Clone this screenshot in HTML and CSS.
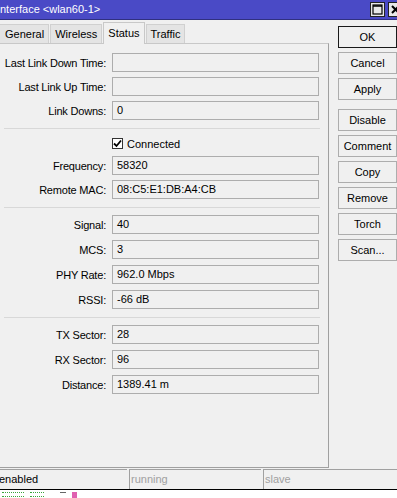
FILE: index.html
```html
<!DOCTYPE html>
<html lang="en">
<head>
    <meta charset="UTF-8">
    <title>Interface &lt;wlan60-1&gt;</title>
    <link rel="stylesheet" href="styles.css">
</head>
<body>
<div class="window">
    <div class="titlebar">
        <span class="title">nterface &lt;wlan60-1&gt;</span>
        <div class="title-buttons">
            <span class="tbtn"><svg width="11" height="11" viewBox="0 0 11 11"><rect x="1" y="1" width="9" height="9" fill="none" stroke="#000" stroke-width="1.2"/><line x1="1" y1="2" x2="10" y2="2" stroke="#000" stroke-width="1.5"/></svg></span>
            <span class="tbtn close"><svg width="11" height="11" viewBox="0 0 11 11"><path d="M2 2 L9 9 M9 2 L2 9" stroke="#000" stroke-width="2"/></svg></span>
        </div>
    </div>

    <div class="main">
        <div class="left">
            <div class="tabs">
                <div class="tab">General</div>
                <div class="tab">Wireless</div>
                <div class="tab active">Status</div>
                <div class="tab">Traffic</div>
            </div>
            <div class="panel">
                <div class="row"><label>Last Link Down Time:</label><div class="field"></div></div>
                <div class="row"><label>Last Link Up Time:</label><div class="field"></div></div>
                <div class="row"><label>Link Downs:</label><div class="field">0</div></div>
                <div class="sep"></div>
                <div class="row check-row"><label></label><div class="check"><span class="box"><svg width="9" height="9" viewBox="0 0 9 9"><path d="M1 4.5 L3.5 7 L8 1.5" fill="none" stroke="#000" stroke-width="1.8"/></svg></span>Connected</div></div>
                <div class="row"><label>Frequency:</label><div class="field">58320</div></div>
                <div class="row"><label>Remote MAC:</label><div class="field">08:C5:E1:DB:A4:CB</div></div>
                <div class="sep"></div>
                <div class="row wide"><label>Signal:</label><div class="field">40</div></div>
                <div class="row wide"><label>MCS:</label><div class="field">3</div></div>
                <div class="row wide"><label>PHY Rate:</label><div class="field">962.0 Mbps</div></div>
                <div class="row"><label>RSSI:</label><div class="field">-66 dB</div></div>
                <div class="sep"></div>
                <div class="row wide"><label>TX Sector:</label><div class="field">28</div></div>
                <div class="row wide"><label>RX Sector:</label><div class="field">96</div></div>
                <div class="row"><label>Distance:</label><div class="field">1389.41 m</div></div>
            </div>
        </div>

        <div class="buttons">
            <button class="default">OK</button>
            <button>Cancel</button>
            <button>Apply</button>
            <button class="gap">Disable</button>
            <button>Comment</button>
            <button>Copy</button>
            <button>Remove</button>
            <button>Torch</button>
            <button>Scan...</button>
        </div>
    </div>

    <div class="statusbar">
        <div class="cell first">enabled</div>
        <div class="cell dim">running</div>
        <div class="cell dim last">slave</div>
    </div>
</div>
<div class="behind">
    <span class="mark green w1"></span>
    <span class="mark green w2"></span>
    <span class="mark grey"></span>
    <span class="mark pink"></span>
</div>
</body>
</html>
```

FILE: styles.css
```css
body {
    margin: 0;
    font-family: "Liberation Sans", Arial, sans-serif;
    font-size: 11px;
    color: #000;
    background: #fff;
    width: 397px;
    height: 498px;
    overflow: hidden;
}
.window {
    background-color: #f0f0f0;
    height: 489px;
    border-bottom: 1px solid #000;
    display: flex;
    flex-direction: column;
}
.titlebar {
    height: 19px;
    background-color: #4a4ac6;
    display: flex;
    align-items: center;
    justify-content: space-between;
    color: #fff;
    font-size: 11px;
    border-bottom: 1px solid #303080;
    flex-shrink: 0;
}
.title {
    margin-top: -1px;
}
.title-buttons {
    display: flex;
    gap: 3px;
    margin-right: -6px;
}
.tbtn {
    width: 13px;
    height: 13px;
    background: #e8e8e8;
    border: 1px solid #222;
    display: flex;
    align-items: center;
    justify-content: center;
}
.main {
    display: flex;
    flex: 1;
}
.left {
    width: 329px;
    display: flex;
    flex-direction: column;
}
.tabs {
    display: flex;
    height: 22px;
    align-items: flex-end;
    padding-top: 1px;
}
.tab {
    height: 19px;
    line-height: 19px;
    padding: 0 4px;
    margin-right: 1px;
    background: #e4e4e4;
    border: 1px solid #d0d0d0;
    border-bottom: none;
    box-sizing: border-box;
    white-space: nowrap;
}
.tab:first-child {
    margin-left: -1px;
    padding-left: 5px;
}
.tab.active {
    height: 22px;
    line-height: 20px;
    background: #f0f0f0;
    border-color: #c8c8c8;
    position: relative;
    top: 1px;
}
.panel {
    flex: 1;
    border-top: 1px solid #c8c8c8;
    border-right: 1px solid #a0a0a0;
    border-bottom: 1px solid #a0a0a0;
    padding: 9px 0 0 0;
    display: flex;
    flex-direction: column;
}
.row {
    display: flex;
    align-items: center;
    height: 19px;
    margin-bottom: 5px;
    white-space: nowrap;
}
.row.wide {
    margin-bottom: 6px;
}
.row label {
    width: 112px;
    text-align: right;
    padding-right: 6px;
    box-sizing: border-box;
    flex-shrink: 0;
    letter-spacing: -0.2px;
}
.field {
    width: 207px;
    height: 19px;
    box-sizing: border-box;
    border: 1px solid #adadad;
    background: #f0f0f0;
    padding: 0 4px;
    line-height: 17px;
}
.sep {
    height: 1px;
    background: #d8d8d8;
    margin: 3px 8px 7px 4px;
}
.check-row {
    margin-top: -2px;
    margin-bottom: 3px;
}
.check {
    display: flex;
    align-items: center;
    gap: 4px;
}
.box {
    width: 11px;
    height: 11px;
    border: 1px solid #333;
    background: #fff;
    display: flex;
    align-items: center;
    justify-content: center;
    box-sizing: border-box;
}
.buttons {
    display: flex;
    flex-direction: column;
    gap: 4px;
    padding: 6px 0 0 9px;
}
.buttons button {
    width: 59px;
    height: 22px;
    font-family: "Liberation Sans", Arial, sans-serif;
    font-size: 11px;
    background: #f0f0f0;
    border: 1px solid #adadad;
    padding: 0;
    color: #000;
}
.buttons button.default {
    border: 1px solid #1a1a1a;
}
.buttons button.gap {
    margin-top: 5px;
}
.statusbar {
    display: flex;
    height: 20px;
    padding-top: 1px;
    flex-shrink: 0;
}
.cell {
    border-top: 1px solid #a0a0a0;
    border-left: 1px solid #a0a0a0;
    width: 132px;
    line-height: 18px;
    box-sizing: border-box;
    margin-right: 2px;
    padding-left: 1px;
}
.cell.first {
    border-left: none;
    width: 128px;
    padding-left: 0;
    margin-left: -1px;
}
.cell.dim {
    color: #a0a0a0;
}
.cell.last {
    flex: 1;
    margin-right: 0;
}
.behind {
    height: 8px;
    display: flex;
    align-items: flex-start;
    gap: 6px;
    padding: 2px 0 0 2px;
    box-sizing: border-box;
}
.mark {
    height: 3px;
}
.green {
    border-top: 1px dotted #3aa53a;
    border-bottom: 1px dotted #3aa53a;
}
.w1 {
    width: 22px;
}
.w2 {
    width: 14px;
}
.grey {
    width: 6px;
    border-top: 1px solid #666;
    margin-left: 10px;
}
.pink {
    width: 5px;
    height: 6px;
    background: #e060b0;
}
```
